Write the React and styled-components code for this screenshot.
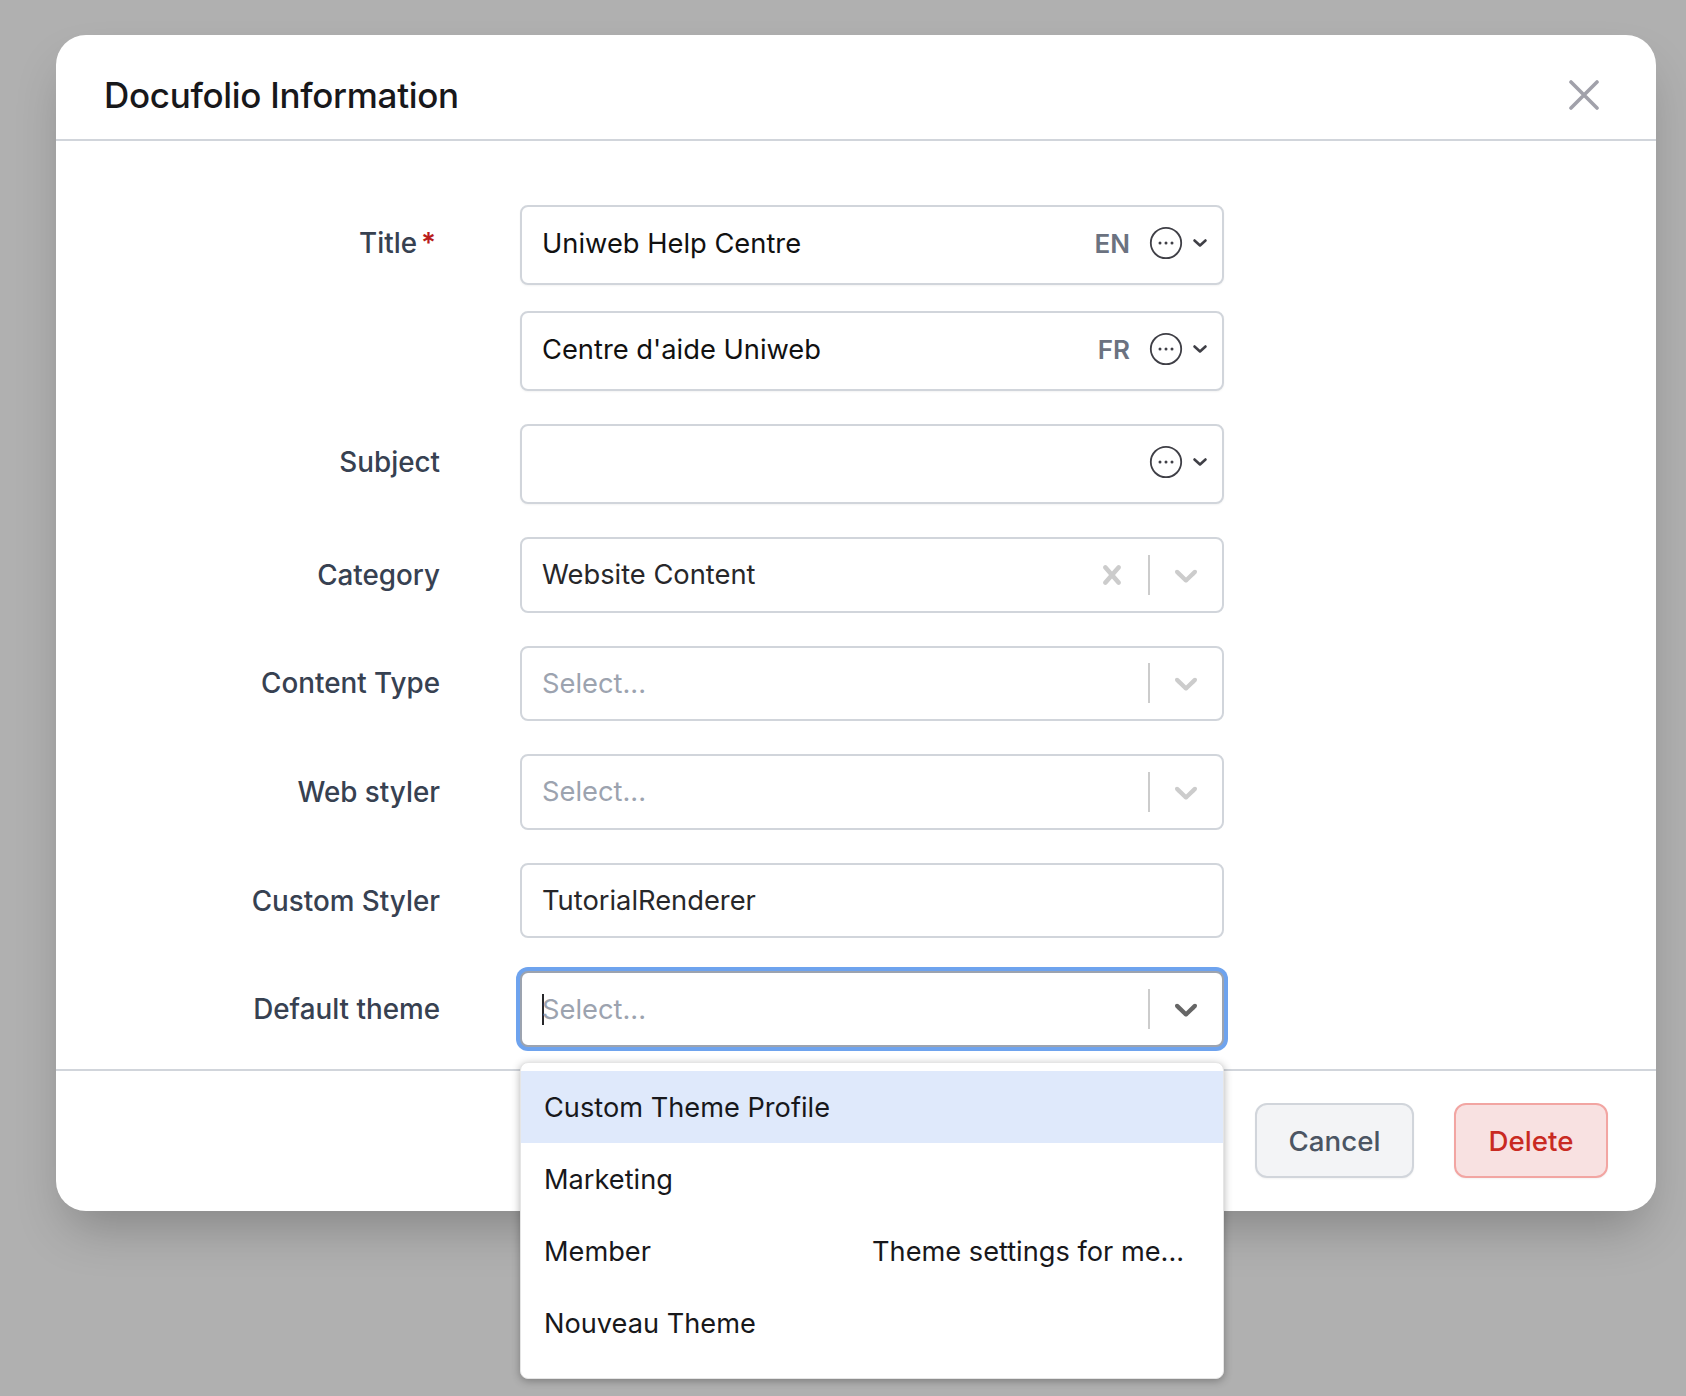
import React from "react";
import styled, { createGlobalStyle } from "styled-components";

const GlobalStyle = createGlobalStyle`
  html, body {
    margin: 0;
    height: 100%;
    overflow: hidden;
    background: #b0b0b0;
    font-family: Inter, "Liberation Sans", sans-serif;
  }
  * { box-sizing: border-box; }
`;

const Page = styled.div`
  height: 1396px;
  padding: 35px 30px 0 56px;
  background: #b0b0b0;
`;

const Dialog = styled.div`
  width: 1600px;
  height: 1176px;
  background: #fff;
  border-radius: 30px;
  box-shadow: 0 26px 50px -12px rgba(0, 0, 0, 0.25);
  display: flex;
  flex-direction: column;
`;

const Header = styled.div`
  height: 106px;
  padding: 15px 57px 0 48px;
  border-bottom: 2px solid #d1d5db;
  display: flex;
  align-items: center;
  justify-content: space-between;
`;

const Heading = styled.h2`
  margin: 0;
  font-size: 35px;
  font-weight: 500;
  color: #18181b;
  letter-spacing: -0.3px;
`;

const Form = styled.div`
  flex: 1;
  padding: 64px 0 0;
  display: flex;
  flex-direction: column;
  gap: 33px;
`;

const Row = styled.div`
  display: grid;
  grid-template-columns: 384px 704px;
  column-gap: 80px;
  align-items: ${(p) => (p.$top ? "start" : "center")};
`;

const Label = styled.div`
  text-align: right;
  font-size: 27.8px;
  font-weight: 500;
  color: #374151;
  line-height: ${(p) => (p.$top ? "76px" : "normal")};
  margin-top: ${(p) => p.$shift || 0}px;
`;

const Required = styled.span`
  color: #b91c1c;
  font-weight: 600;
  margin-left: 4px;
  margin-right: 4px;
`;

const Stack = styled.div`
  display: flex;
  flex-direction: column;
  gap: 26px;
`;

const Field = styled.div`
  position: relative;
  height: ${(p) => p.$h}px;
  border: 2px solid ${(p) => (p.$focus ? "#9ca3af" : "#d1d5db")};
  border-radius: 8px;
  background: #fff;
  display: flex;
  align-items: center;
  padding-left: 20px;
  box-shadow: ${(p) =>
    p.$focus ? "0 0 0 4px #6ea3ee" : p.$raised ? "0 1px 2px rgba(0,0,0,0.05)" : "none"};
`;

const Value = styled.div`
  flex: 1;
  font-size: 27.3px;
  color: ${(p) => (p.$muted ? "#9ca3af" : p.$soft ? "#27272a" : "#111")};
  margin-top: ${(p) => p.$shift || 0}px;
`;

const Caret = styled.span`
  display: inline-block;
  width: 2px;
  height: 31px;
  background: #27272a;
  vertical-align: -6px;
  margin-right: -2px;
`;

const Lang = styled.span`
  font-size: 26px;
  font-weight: 600;
  color: #6b7280;
  margin-right: 19px;
  margin-top: -3px;
`;

const Tools = styled.div`
  display: flex;
  align-items: center;
  gap: 9px;
  padding-right: 14px;
  margin-top: -5px;
`;

const Indicators = styled.div`
  display: flex;
  align-items: center;
  margin-right: 1px;
`;

const ClearBox = styled.div`
  width: 38px;
  height: 38px;
  margin-right: 17px;
  color: #cccccc;
`;

const Separator = styled.span`
  width: 2px;
  height: 40px;
  background: #cccccc;
`;

const ArrowBox = styled.div`
  width: 71px;
  height: 38px;
  display: flex;
  justify-content: center;
  color: ${(p) => (p.$dark ? "#666666" : "#cccccc")};
`;

const Footer = styled.div`
  height: 142px;
  border-top: 2px solid #d1d5db;
  padding: 32px 48px 0 0;
  display: flex;
  justify-content: flex-end;
  gap: 40px;
`;

const Button = styled.button`
  height: 75px;
  border-radius: 12px;
  border: 2px solid ${(p) => (p.$danger ? "#f2a5a2" : "#d1d5db")};
  background: ${(p) => (p.$danger ? "#f8e1e1" : "#f3f4f6")};
  color: ${(p) => (p.$danger ? "#c92a22" : "#4b5563")};
  font-family: inherit;
  font-size: 27.7px;
  font-weight: 500;
  width: ${(p) => p.$w}px;
  box-shadow: 0 1px 2px rgba(0, 0, 0, 0.05);
`;

const Menu = styled.div`
  position: absolute;
  top: 89px;
  left: -2px;
  width: 704px;
  height: 317px;
  background: #fff;
  border: 1px solid #e5e5e5;
  border-radius: 8px;
  padding: 8px 0 0;
  box-shadow: 0 2px 8px rgba(0, 0, 0, 0.3);
  z-index: 2;
`;

const Option = styled.div`
  height: 72px;
  padding: 0 23px;
  display: grid;
  grid-template-columns: 328px 1fr;
  align-items: center;
  font-size: 27.2px;
  color: #18181b;
  background: ${(p) => (p.$active ? "#dfe9fb" : "transparent")};
`;

const Note = styled.span`
  white-space: nowrap;
`;

const More = () => (
  <svg width="34" height="34" viewBox="0 0 34 34" fill="none">
    <circle cx="17" cy="17" r="15.2" stroke="#3f3f46" strokeWidth="1.8" />
    <circle cx="11" cy="17" r="1.5" fill="#3f3f46" />
    <circle cx="17" cy="17" r="1.5" fill="#3f3f46" />
    <circle cx="23" cy="17" r="1.5" fill="#3f3f46" />
  </svg>
);

const SmallChevron = () => (
  <svg width="16" height="16" viewBox="0 0 16 16" fill="none">
    <path d="M2.5 5.5 8 10.5l5.5-5" stroke="#3f3f46" strokeWidth="2.6" strokeLinecap="round" strokeLinejoin="round" />
  </svg>
);

const SelectChevron = () => (
  <svg width="38" height="38" viewBox="0 0 20 20" fill="currentColor">
    <path d="M4.516 7.548c0.436-0.446 1.043-0.481 1.576 0l3.908 3.747 3.908-3.747c0.533-0.481 1.141-0.446 1.574 0 0.436 0.445 0.408 1.197 0 1.615-0.406 0.418-4.695 4.502-4.695 4.502-0.217 0.223-0.502 0.335-0.787 0.335s-0.57-0.112-0.789-0.335c0 0-4.287-4.084-4.695-4.502s-0.436-1.17 0-1.615z" />
  </svg>
);

const Cross = () => (
  <svg width="38" height="38" viewBox="0 0 20 20" fill="currentColor">
    <path d="M14.348 14.849c-0.469 0.469-1.229 0.469-1.697 0l-2.651-3.030-2.651 3.029c-0.469 0.469-1.229 0.469-1.697 0-0.469-0.469-0.469-1.229 0-1.697l2.758-3.15-2.759-3.152c-0.469-0.469-0.469-1.228 0-1.697s1.228-0.469 1.697 0l2.652 3.031 2.651-3.031c0.469-0.469 1.228-0.469 1.697 0s0.469 1.229 0 1.697l-2.758 3.152 2.758 3.15c0.469 0.469 0.469 1.229 0 1.698z" />
  </svg>
);

const CloseIcon = () => (
  <svg width="30" height="30" viewBox="0 0 30 30" fill="none">
    <path d="M2 2l26 26M28 2 2 28" stroke="#a1a1aa" strokeWidth="3.6" strokeLinecap="round" />
  </svg>
);

const LangField = ({ value, lang }) => (
  <Field $h={80} $raised>
    <Value $shift={-4}>{value}</Value>
    {lang && <Lang>{lang}</Lang>}
    <Tools>
      <More />
      <SmallChevron />
    </Tools>
  </Field>
);

const SelectField = ({ value, clearable }) => (
  <Field $h={75.6}>
    <Value $muted={!value} $soft={!!value}>{value || "Select..."}</Value>
    <Indicators>
      {clearable && (
        <ClearBox>
          <Cross />
        </ClearBox>
      )}
      <Separator />
      <ArrowBox>
        <SelectChevron />
      </ArrowBox>
    </Indicators>
  </Field>
);

const themes = [
  { name: "Custom Theme Profile", active: true },
  { name: "Marketing" },
  { name: "Member", note: "Theme settings for me..." },
  { name: "Nouveau Theme" },
];

export default function App() {
  return (
    <>
      <GlobalStyle />
      <Page>
        <Dialog>
          <Header>
            <Heading>Docufolio Information</Heading>
            <CloseIcon />
          </Header>
          <Form>
            <Row $top>
              <Label $top>
                Title<Required>*</Required>
              </Label>
              <Stack>
                <LangField value="Uniweb Help Centre" lang="EN" />
                <LangField value="Centre d'aide Uniweb" lang="FR" />
              </Stack>
            </Row>
            <Row>
              <Label $shift={-4}>Subject</Label>
              <LangField />
            </Row>
            <Row>
              <Label>Category</Label>
              <SelectField value="Website Content" clearable />
            </Row>
            <Row>
              <Label>Content Type</Label>
              <SelectField />
            </Row>
            <Row>
              <Label>Web styler</Label>
              <SelectField />
            </Row>
            <Row>
              <Label>Custom Styler</Label>
              <Field $h={75.6}>
                <Value $soft>TutorialRenderer</Value>
              </Field>
            </Row>
            <Row>
              <Label>Default theme</Label>
              <Field $h={76} $focus>
                <Value $muted>
                  <Caret />
                  Select...
                </Value>
                <Indicators>
                  <Separator />
                  <ArrowBox $dark>
                    <SelectChevron />
                  </ArrowBox>
                </Indicators>
                <Menu>
                  {themes.map((t) => (
                    <Option key={t.name} $active={t.active}>
                      <span>{t.name}</span>
                      {t.note && <Note>{t.note}</Note>}
                    </Option>
                  ))}
                </Menu>
              </Field>
            </Row>
          </Form>
          <Footer>
            <Button $w={159}>Cancel</Button>
            <Button $w={154} $danger>
              Delete
            </Button>
          </Footer>
        </Dialog>
      </Page>
    </>
  );
}
